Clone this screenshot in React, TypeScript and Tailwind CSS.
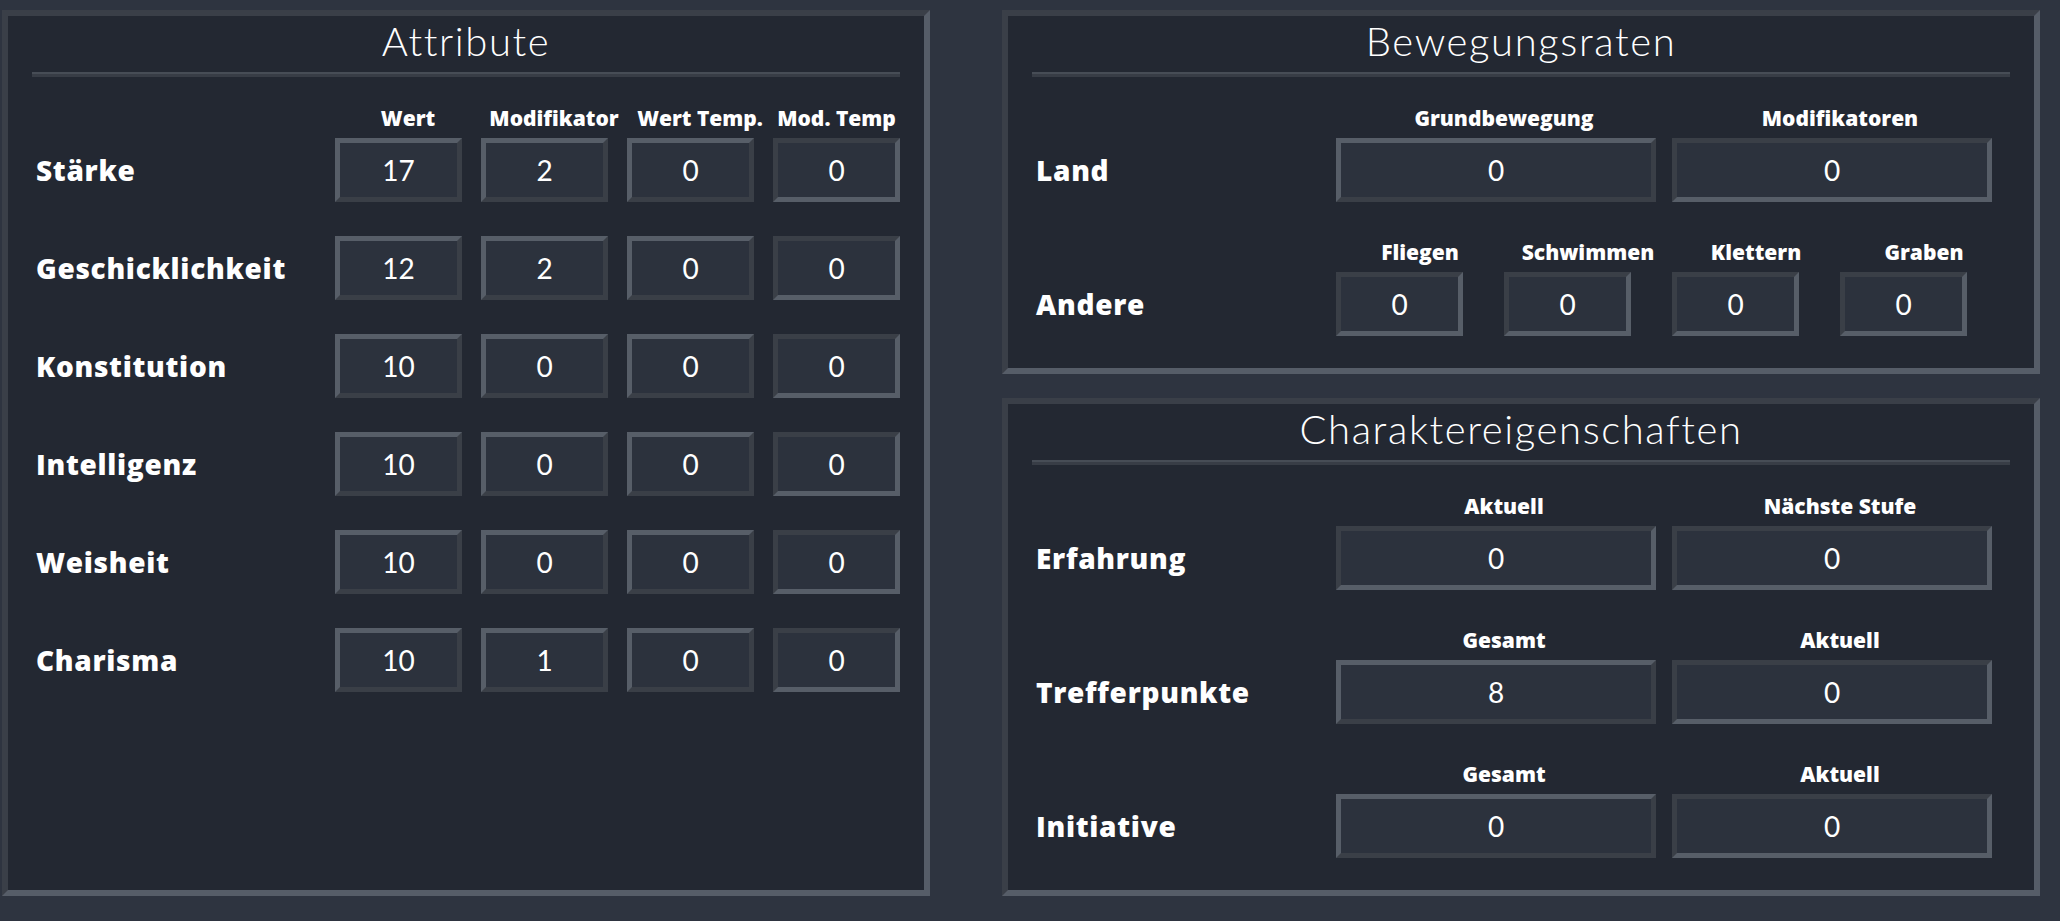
import { clsx } from "clsx";

const OUTSET = "border-t-[#575e68] border-l-[#575e68] border-r-[#3a3f47] border-b-[#3a3f47]";
const INSET = "border-t-[#3a3f47] border-l-[#3a3f47] border-r-[#575e68] border-b-[#575e68]";

interface FieldProps {
    value: string;
    inset?: boolean;
    width: string;
}

function Field({ value, inset, width }: FieldProps) {
    return (
        <div
            className={clsx(
                "flex h-[64px] items-center justify-center border-[5px] bg-[#2c323d] text-[28px] text-white",
                width,
                inset ? INSET : OUTSET
            )}
        >
            {value}
        </div>
    );
}

function Panel({ title, height, width, children }: { title: string; height: string; width: string; children: React.ReactNode }) {
    return (
        <div
            className={clsx(
                "flex flex-col border-[6px] border-t-[#3a3f48] border-l-[#3a3f48] border-r-[#565d68] border-b-[#565d68] bg-[#232832]",
                height,
                width
            )}
        >
            <h2 className="pt-[1px] text-center text-[40px] leading-[48px] font-light tracking-[1.6px] text-white">{title}</h2>
            <div className="mx-[24px] mt-[7px] h-[5px] border-t-2 border-[#474d56] bg-[#383d46]" />
            {children}
        </div>
    );
}

const ATTRIBUTES = [
    { label: "Stärke", values: ["17", "2", "0", "0"] },
    { label: "Geschicklichkeit", values: ["12", "2", "0", "0"] },
    { label: "Konstitution", values: ["10", "0", "0", "0"] },
    { label: "Intelligenz", values: ["10", "0", "0", "0"] },
    { label: "Weisheit", values: ["10", "0", "0", "0"] },
    { label: "Charisma", values: ["10", "1", "0", "0"] },
];

const ATTR_HEADERS = ["Wert", "Modifikator", "Wert Temp.", "Mod. Temp"];

const BOLD_FONT = "font-['Open_Sans','Liberation_Sans',sans-serif] font-extrabold";

function RowLabel({ children, width }: { children: string; width: string }) {
    return (
        <div className={clsx("flex h-[64px] shrink-0 items-center text-[28px] tracking-[0.7px] text-white", BOLD_FONT, width)}>
            {children}
        </div>
    );
}

function Header({ children, width }: { children: string; width: string }) {
    return (
        <div
            className={clsx(
                "flex h-[25px] justify-center whitespace-nowrap text-[21px] leading-[25px] tracking-[0px] text-white",
                BOLD_FONT,
                width
            )}
        >
            {children}
        </div>
    );
}

interface GroupCol {
    header: string;
    value: string;
    inset?: boolean;
}

function GroupRow({ label, cols, cell, box }: { label: string; cols: GroupCol[]; cell: string; box: string }) {
    return (
        <div className="flex items-end">
            <RowLabel width="w-[300px]">{label}</RowLabel>
            {cols.map((col, i) => (
                <div key={i} className={clsx("flex flex-col", cell)}>
                    <Header width="w-full">{col.header}</Header>
                    <div className="mt-[7px]">
                        <Field value={col.value} inset={col.inset} width={box} />
                    </div>
                </div>
            ))}
        </div>
    );
}

export default function App() {
    return (
        <div className="flex h-[921px] w-[2060px] gap-[72px] bg-[#2e3440] pt-[10px] pl-[2px] font-['Lato','Liberation_Sans',sans-serif]">
            <Panel title="Attribute" height="h-[886px]" width="w-[928px]">
                <div className="mt-[29px] flex pl-[28px]">
                    <div className="w-[299px] shrink-0" />
                    {ATTR_HEADERS.map((h, i) => (
                        <Header key={h} width={i === 3 ? "w-[127px]" : "w-[146px]"}>
                            {h}
                        </Header>
                    ))}
                </div>
                <div className="mt-[7px] flex flex-col gap-[34px] pl-[28px]">
                    {ATTRIBUTES.map(attr => (
                        <div key={attr.label} className="flex items-center">
                            <RowLabel width="w-[299px]">{attr.label}</RowLabel>
                            <div className="flex gap-[19px]">
                                {attr.values.map((v, i) => (
                                    <Field key={i} value={v} inset={i === 3} width="w-[127px]" />
                                ))}
                            </div>
                        </div>
                    ))}
                </div>
            </Panel>

            <div className="flex flex-col gap-[24px]">
                <Panel title="Bewegungsraten" height="h-[364px]" width="w-[1038px]">
                    <div className="mt-[29px] flex flex-col gap-[38px] pl-[28px]">
                        <GroupRow
                            label="Land"
                            cell="w-[336px]"
                            box="w-[320px]"
                            cols={[
                                { header: "Grundbewegung", value: "0" },
                                { header: "Modifikatoren", value: "0", inset: true },
                            ]}
                        />
                        <GroupRow
                            label="Andere"
                            cell="w-[168px]"
                            box="w-[127px]"
                            cols={[
                                { header: "Fliegen", value: "0", inset: true },
                                { header: "Schwimmen", value: "0", inset: true },
                                { header: "Klettern", value: "0", inset: true },
                                { header: "Graben", value: "0", inset: true },
                            ]}
                        />
                    </div>
                </Panel>

                <Panel title="Charaktereigenschaften" height="h-[498px]" width="w-[1038px]">
                    <div className="mt-[29px] flex flex-col gap-[38px] pl-[28px]">
                        <GroupRow
                            label="Erfahrung"
                            cell="w-[336px]"
                            box="w-[320px]"
                            cols={[
                                { header: "Aktuell", value: "0", inset: true },
                                { header: "Nächste Stufe", value: "0", inset: true },
                            ]}
                        />
                        <GroupRow
                            label="Trefferpunkte"
                            cell="w-[336px]"
                            box="w-[320px]"
                            cols={[
                                { header: "Gesamt", value: "8" },
                                { header: "Aktuell", value: "0", inset: true },
                            ]}
                        />
                        <GroupRow
                            label="Initiative"
                            cell="w-[336px]"
                            box="w-[320px]"
                            cols={[
                                { header: "Gesamt", value: "0" },
                                { header: "Aktuell", value: "0", inset: true },
                            ]}
                        />
                    </div>
                </Panel>
            </div>
        </div>
    );
}
